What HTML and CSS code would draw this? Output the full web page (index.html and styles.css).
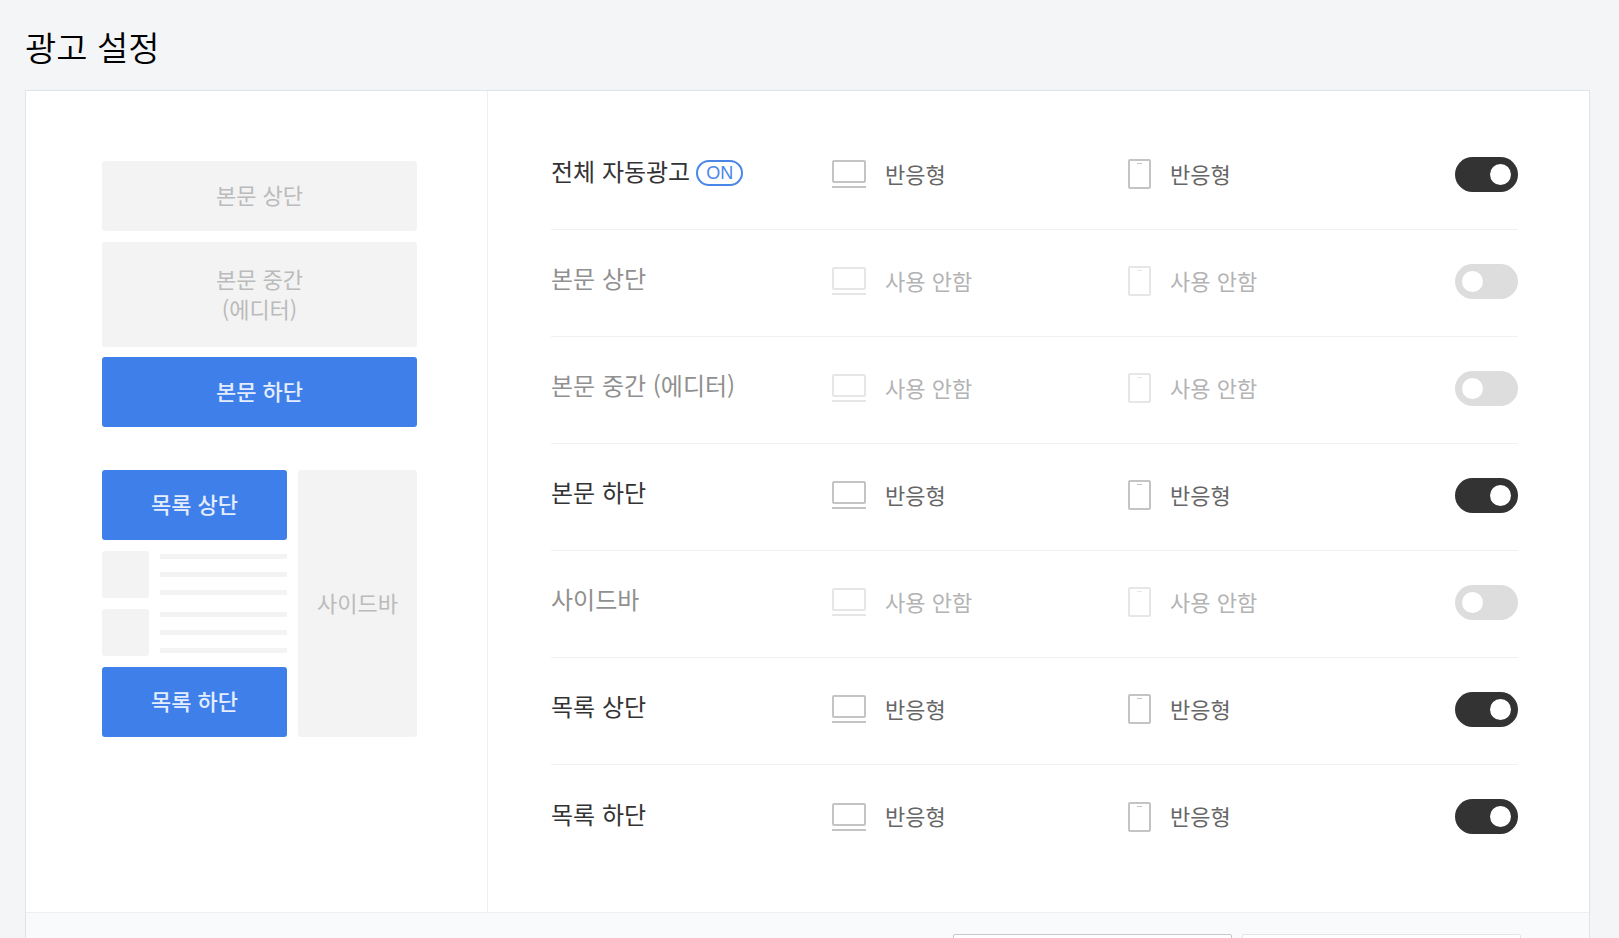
FILE: index.html
```html
<!DOCTYPE html>
<html lang="ko">
<head>
  <meta charset="UTF-8" />
  <title>광고 설정</title>
  <meta name="viewport" content="width=device-width, initial-scale=1.0" />
  <link rel="stylesheet" href="styles.css">
</head>
<body>
  <!-- shared icons -->
  <svg class="sprite" aria-hidden="true">
    <symbol id="icon-pc" viewBox="0 0 34 28">
      <rect x="1" y="1" width="32" height="21" rx="1" fill="none" stroke="currentColor" stroke-width="2" />
      <path d="M0 27h34" stroke="currentColor" stroke-width="2" />
    </symbol>
    <symbol id="icon-mobile" viewBox="0 0 23 30">
      <rect x="1" y="1" width="21" height="28" rx="1" fill="none" stroke="currentColor" stroke-width="2" />
      <path d="M9 4.500h5" stroke="currentColor" stroke-width="1" />
    </symbol>
  </svg>

  <h1>광고 설정</h1>

  <main class="panel">
    <div class="panel-body">
      <div class="preview">
        <div class="slot">본문 상단</div>
        <div class="slot tall">본문 중간<br>(에디터)</div>
        <div class="slot on">본문 하단</div>
        <div class="list-preview">
          <div class="list-main">
            <div class="slot on">목록 상단</div>
            <div class="post">
              <div class="thumb"></div>
              <div class="lines"><i></i><i></i><i></i></div>
            </div>
            <div class="post">
              <div class="thumb"></div>
              <div class="lines"><i></i><i></i><i></i></div>
            </div>
            <div class="slot on">목록 하단</div>
          </div>
          <div class="slot side">사이드바</div>
        </div>
      </div>

      <ul class="settings">
        <li class="row">
          <label class="name" for="ad-auto">전체 자동광고 <span class="badge">ON</span></label>
          <span class="value"><svg class="pc"><use href="#icon-pc" /></svg>반응형</span>
          <span class="value"><svg class="mobile"><use href="#icon-mobile" /></svg>반응형</span>
          <input type="checkbox" class="toggle" id="ad-auto" checked>
        </li>
        <li class="row off">
          <label class="name" for="ad-top">본문 상단</label>
          <span class="value"><svg class="pc"><use href="#icon-pc" /></svg>사용 안함</span>
          <span class="value"><svg class="mobile"><use href="#icon-mobile" /></svg>사용 안함</span>
          <input type="checkbox" class="toggle" id="ad-top">
        </li>
        <li class="row off">
          <label class="name" for="ad-middle">본문 중간 (에디터)</label>
          <span class="value"><svg class="pc"><use href="#icon-pc" /></svg>사용 안함</span>
          <span class="value"><svg class="mobile"><use href="#icon-mobile" /></svg>사용 안함</span>
          <input type="checkbox" class="toggle" id="ad-middle">
        </li>
        <li class="row">
          <label class="name" for="ad-bottom">본문 하단</label>
          <span class="value"><svg class="pc"><use href="#icon-pc" /></svg>반응형</span>
          <span class="value"><svg class="mobile"><use href="#icon-mobile" /></svg>반응형</span>
          <input type="checkbox" class="toggle" id="ad-bottom" checked>
        </li>
        <li class="row off">
          <label class="name" for="ad-side">사이드바</label>
          <span class="value"><svg class="pc"><use href="#icon-pc" /></svg>사용 안함</span>
          <span class="value"><svg class="mobile"><use href="#icon-mobile" /></svg>사용 안함</span>
          <input type="checkbox" class="toggle" id="ad-side">
        </li>
        <li class="row">
          <label class="name" for="ad-list-top">목록 상단</label>
          <span class="value"><svg class="pc"><use href="#icon-pc" /></svg>반응형</span>
          <span class="value"><svg class="mobile"><use href="#icon-mobile" /></svg>반응형</span>
          <input type="checkbox" class="toggle" id="ad-list-top" checked>
        </li>
        <li class="row">
          <label class="name" for="ad-list-bottom">목록 하단</label>
          <span class="value"><svg class="pc"><use href="#icon-pc" /></svg>반응형</span>
          <span class="value"><svg class="mobile"><use href="#icon-mobile" /></svg>반응형</span>
          <input type="checkbox" class="toggle" id="ad-list-bottom" checked>
        </li>
      </ul>
    </div>

    <div class="panel-footer">
      <button type="button" class="btn" aria-label="연동 관리"></button>
      <button type="button" class="btn light" aria-label="변경사항 저장"></button>
    </div>
  </main>
</body>
</html>
```
FILE: styles.css
```css
:root {
  --blue: #3f7fea;
  --dark: #333;
  --block: #f3f3f3;
  --line: #f0f0f0;
}
* { margin: 0; padding: 0; box-sizing: border-box; }
body {
  height: 100vh;
  overflow: hidden;
  padding: 23px 29px 0 25px;
  font-family: "Noto Sans CJK KR", sans-serif;
  font-size: 22px;
  background: #f3f5f7;
  color: var(--dark);
}
.sprite {
  display: none;
}
h1 {
  margin-bottom: 19px;
  font-size: 34px;
  font-weight: 350;
  line-height: 48px;
  color: #000;
}
.panel {
  background: #fff;
  border: 1px solid #e0e3e8;
}
.panel-body {
  display: flex;
}

/* layout preview */
.preview {
  flex: 0 0 462px;
  padding: 70px 70px 70px 76px;
  border-right: 1px solid var(--line);
}
.slot {
  display: flex;
  align-items: center;
  justify-content: center;
  height: 70px;
  margin-bottom: 11px;
  padding-bottom: 4px;
  border-radius: 3px;
  background: var(--block);
  color: #bbb;
  line-height: 30px;
  text-align: center;
}
.slot.tall {
  height: 105px;
  margin-bottom: 10px;
}
.slot.on {
  background: var(--blue);
  color: #e3edff;
  font-weight: 500;
}
.list-preview {
  display: flex;
  gap: 11px;
  margin-top: 43px;
}
.list-main {
  flex: 1;
  display: flex;
  flex-direction: column;
  gap: 11px;
}
.list-preview .slot {
  margin-bottom: 0;
}
.slot.side {
  flex: 0 0 119px;
  height: auto;
}
.post {
  display: flex;
  gap: 11px;
}
.thumb {
  width: 47px;
  height: 47px;
  border-radius: 3px;
  background: var(--block);
}
.lines {
  flex: 1;
  display: flex;
  flex-direction: column;
  justify-content: space-between;
  padding: 3px 0;
}
.lines i {
  height: 5px;
  background: var(--block);
}

/* setting rows */
.settings {
  flex: 1;
  padding: 32px 71px 40px 63px;
  list-style: none;
}
.row {
  display: grid;
  grid-template-columns: 281fr 296fr 327fr 63px;
  align-items: center;
  height: 107px;
  padding-bottom: 4px;
  border-bottom: 1px solid var(--line);
}
.row:last-child {
  border-bottom: none;
}
.name {
  display: flex;
  align-items: center;
  gap: 6px;
  padding-bottom: 7px;
  font-size: 24px;
}
.badge {
  margin-top: 4px;
  padding: 0 8px;
  border: 2px solid #4a86e8;
  border-radius: 13px;
  font-family: "Liberation Sans", Arial, sans-serif;
  font-size: 18px;
  line-height: 22px;
  color: #4a86e8;
}
.value {
  display: flex;
  align-items: center;
  gap: 19px;
  padding-bottom: 3px;
  color: #666;
}
.value svg {
  margin-top: 3px;
  color: #c4c4c4;
}
.pc {
  width: 34px;
  height: 28px;
}
.mobile {
  width: 23px;
  height: 30px;
}
.off .name {
  color: #909090;
}
.off .value {
  color: #b3b3b3;
}
.off svg {
  color: #e6e6e6;
}
.toggle {
  appearance: none;
  display: flex;
  width: 63px;
  height: 35px;
  padding: 7px;
  border-radius: 18px;
  background: #ddd;
  cursor: pointer;
}
.toggle::before {
  content: "";
  width: 21px;
  height: 21px;
  border-radius: 50%;
  background: #fff;
}
.toggle:checked {
  justify-content: flex-end;
  background: var(--dark);
}

.panel-footer {
  display: flex;
  justify-content: flex-end;
  gap: 10px;
  padding: 21px 68px;
  border-top: 1px solid #edeff2;
  background: #f9fafc;
}
.btn {
  width: 279px;
  height: 70px;
  border: 1px solid #c4c7cb;
  border-radius: 2px;
  background: #fff;
  cursor: pointer;
}
.btn.light {
  border-color: #e2e4e7;
}
```
